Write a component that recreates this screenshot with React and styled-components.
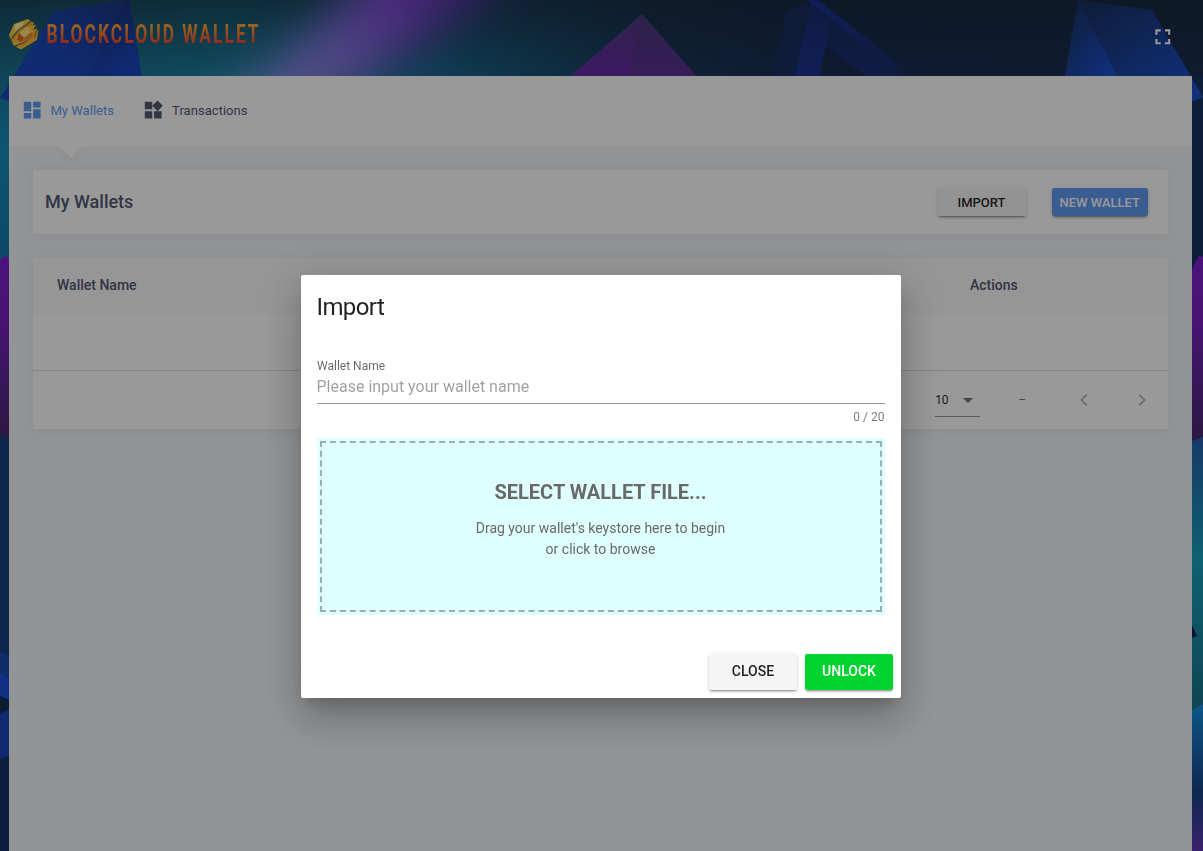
import React from "react";
import styled, { createGlobalStyle } from "styled-components";

const GlobalStyle = createGlobalStyle`
  * { box-sizing: border-box; }
  html, body { margin: 0; padding: 0; }
  body {
    font-family: Roboto, "Liberation Sans", sans-serif;
    background: #173567;
    overflow: hidden;
  }
  button, input { font-family: inherit; }
`;

const Backdrop = styled.svg`
  position: fixed;
  inset: 0;
  width: 1203px;
  height: 851px;
`;

const Page = styled.div`
  position: relative;
  display: flex;
  flex-direction: column;
  height: 851px;
  padding: 0 11px 0 9px;
`;

const TopBar = styled.header`
  display: flex;
  align-items: flex-start;
  justify-content: space-between;
  height: 76px;
  flex: none;
  padding: 15px 16px 0 0;
`;

const Logo = styled.svg`
  display: block;
  width: 260px;
  height: 38px;
`;

const WordMark = styled.text`
  font-family: Roboto, "Liberation Sans", sans-serif;
  font-weight: 700;
  font-size: 25.6px;
`;

const Icon = styled.svg`
  display: block;
  flex: none;
  width: ${(p) => p.$size}px;
  height: ${(p) => p.$size}px;
  fill: currentColor;
  color: ${(p) => p.$color || "inherit"};
`;

const FullscreenButton = styled.div`
  margin-top: 9px;
`;

const Main = styled.main`
  flex: 1;
  display: flex;
  flex-direction: column;
  background: #f4f7fa;
`;

const Nav = styled.nav`
  display: flex;
  align-items: center;
  gap: 27.8px;
  height: 70px;
  flex: none;
  padding-left: 12px;
  background: #fff;
`;

const Tab = styled.div`
  position: relative;
  display: flex;
  align-items: center;
  gap: ${(p) => (p.$active ? 7 : 7.8)}px;
  height: 70px;
  padding-bottom: 1px;
  font-size: 13px;
  color: ${(p) => (p.$active ? "#629cf2" : "#535973")};
`;

const TabLabel = styled.span`
  letter-spacing: 0.04px;
`;

const Pointer = styled.i`
  position: absolute;
  left: 41px;
  bottom: -8px;
  width: 18px;
  height: 18px;
  background: #fff;
  transform: rotate(45deg);
  box-shadow: 4px 4px 8px -2px rgba(69, 65, 78, 0.08);
  clip-path: polygon(100% 0, 200% 0, 200% 200%, 0 200%, 0 100%);
`;

const Content = styled.div`
  display: flex;
  flex-direction: column;
  gap: 24px;
  padding: 24px;
`;

const Panel = styled.section`
  background: #fff;
  box-shadow: 0 1px 15px 1px rgba(69, 65, 78, 0.08);
`;

const TitleRow = styled.div`
  display: flex;
  align-items: center;
  height: 64px;
  padding: 0 20px 0 12px;
  gap: 26px;
`;

const PanelTitle = styled.h2`
  flex: 1;
  margin: 0;
  padding-bottom: 2px;
  font-size: 18px;
  font-weight: 500;
  color: #535973;
`;

const tones = {
  plain: ["#f5f5f5", "rgba(0,0,0,.87)"],
  primary: ["#629cf2", "#fff"],
  success: ["#00d32f", "#fff"],
};

const Button = styled.button`
  min-width: 88px;
  height: ${(p) => (p.$small ? 28 : 36)}px;
  padding: ${(p) => (p.$small ? "0 8px" : "0 16px 2px 17px")};
  border: 0;
  border-radius: 2px;
  font-size: ${(p) => (p.$small ? 13 : 14)}px;
  font-weight: 500;
  white-space: nowrap;
  background: ${(p) => tones[p.$tone][0]};
  color: ${(p) => tones[p.$tone][1]};
  box-shadow: 0 3px 1px -2px rgba(0, 0, 0, 0.2), 0 2px 2px 0 rgba(0, 0, 0, 0.14),
    0 1px 5px 0 rgba(0, 0, 0, 0.12);
`;

const TableHead = styled.div`
  display: grid;
  grid-template-columns: 913px 1fr;
  align-items: center;
  height: 56px;
  padding: 0 0 2px 24px;
  background: #fafafa;
  color: #535973;
  font-size: 14px;
  font-weight: 500;
`;

const EmptyRow = styled.div`
  height: 56px;
`;

const TableFooter = styled.div`
  display: flex;
  align-items: center;
  justify-content: flex-end;
  height: 59px;
  padding-right: 14px;
  border-top: 1px solid #dfdfdf;
  font-size: 12px;
  color: rgba(0, 0, 0, 0.54);
`;

const PageSize = styled.div`
  display: flex;
  align-items: center;
  justify-content: space-between;
  width: 45px;
  height: 33px;
  border-bottom: 1px solid rgba(0, 0, 0, 0.42);
  color: rgba(0, 0, 0, 0.87);
`;

const Range = styled.span`
  margin: 0 46px 0 38px;
`;

const Pager = styled.div`
  display: flex;
  gap: 34px;
  color: rgba(0, 0, 0, 0.26);
`;

const Overlay = styled.div`
  position: fixed;
  inset: 0;
  display: flex;
  justify-content: center;
  align-items: flex-start;
  padding: 275px 2px 0 0;
  background: rgba(0, 0, 0, 0.4);
`;

const Dialog = styled.div`
  display: flex;
  flex-direction: column;
  width: 600px;
  height: 423px;
  border-radius: 2px;
  background: #fff;
  box-shadow: 0 11px 15px -7px rgba(0, 0, 0, 0.2), 0 24px 38px 3px rgba(0, 0, 0, 0.14),
    0 9px 46px 8px rgba(0, 0, 0, 0.12);
`;

const DialogTitle = styled.h1`
  margin: 0;
  padding: 16px;
  font-size: 24px;
  line-height: 32px;
  font-weight: 400;
  letter-spacing: -0.6px;
  color: rgba(0, 0, 0, 0.87);
`;

const DialogBody = styled.div`
  display: flex;
  flex-direction: column;
  flex: 1;
  padding: 18px 16px 0;
`;

const FieldLabel = styled.label`
  padding-left: 0.5px;
  font-size: 12px;
  line-height: 18px;
  color: rgba(0, 0, 0, 0.6);
`;

const Field = styled.input`
  height: 29px;
  padding: 0 0 5px;
  border: 0;
  border-bottom: 1px solid rgba(0, 0, 0, 0.42);
  outline: 0;
  font-size: 16px;
  &::placeholder { color: rgba(0, 0, 0, 0.38); }
`;

const Counter = styled.div`
  align-self: flex-end;
  margin: 4px 0 12px;
  font-size: 12px;
  line-height: 18px;
  color: rgba(0, 0, 0, 0.54);
`;

const DropZone = styled.div`
  height: 177px;
  padding-top: 39px;
  background: #dfffff;
  outline: 2px dashed #94b0b3;
  outline-offset: -5px;
  text-align: center;
  color: #696969;
`;

const DropTitle = styled.h3`
  margin: 0 0 11px;
  font-size: 20px;
  line-height: 30px;
  font-weight: 700;
`;

const DropHint = styled.p`
  margin: 0;
  font-size: 14px;
  line-height: 21px;
`;

const DialogActions = styled.div`
  display: flex;
  justify-content: flex-end;
  gap: 8px;
  padding: 8px;
`;

const Art = () => (
  <Backdrop viewBox="0 0 1203 851">
    <defs>
      <linearGradient id="sky" x1="0" x2="1" y1="0" y2="0">
        <stop offset="0" stopColor="#1b7492" />
        <stop offset=".2" stopColor="#1b7f9c" />
        <stop offset=".36" stopColor="#19688c" />
        <stop offset=".55" stopColor="#19375a" />
        <stop offset=".7" stopColor="#182c52" />
        <stop offset="1" stopColor="#192e50" />
      </linearGradient>
      <linearGradient id="shade" x1="0" x2="0" y1="0" y2="1">
        <stop offset="0" stopColor="#172638" stopOpacity=".6" />
        <stop offset="1" stopColor="#172638" stopOpacity="0" />
      </linearGradient>
      <linearGradient id="beam" gradientUnits="userSpaceOnUse" x1="265" y1="120" x2="460" y2="-20">
        <stop offset="0" stopColor="#9590f0" />
        <stop offset=".35" stopColor="#8f7be6" />
        <stop offset=".7" stopColor="#8049d4" />
        <stop offset="1" stopColor="#5d32a4" />
      </linearGradient>
      <linearGradient id="gemA" x1="1" x2="0" y1="0" y2="1">
        <stop offset="0" stopColor="#1b357c" />
        <stop offset=".6" stopColor="#1b48bc" />
      </linearGradient>
      <linearGradient id="gemB" x1="0" x2=".4" y1="0" y2="1">
        <stop offset="0" stopColor="#1b2a62" />
        <stop offset="1" stopColor="#1b46bd" />
      </linearGradient>
      <linearGradient id="peak" x1="0" x2="0" y1="0" y2="1">
        <stop offset="0" stopColor="#4b3d7d" />
        <stop offset="1" stopColor="#6a29a8" />
      </linearGradient>
      <linearGradient id="peakSide" x1="0" x2="0" y1="0" y2="1">
        <stop offset="0" stopColor="#493a76" />
        <stop offset="1" stopColor="#5d3097" />
      </linearGradient>
      <linearGradient id="rib" x1="0" x2="0" y1="0" y2="1">
        <stop offset="0" stopColor="#1b2e70" />
        <stop offset="1" stopColor="#1c359c" />
      </linearGradient>
      <linearGradient id="ray" x1="0" x2="1" y1="0" y2="1">
        <stop offset="0" stopColor="#1e37c0" />
        <stop offset="1" stopColor="#192e60" />
      </linearGradient>
      <linearGradient id="crystal" x1="0" x2=".8" y1="0" y2="1">
        <stop offset="0" stopColor="#1a2e55" />
        <stop offset="1" stopColor="#1b50cc" />
      </linearGradient>
      <linearGradient id="violet" x1="0" x2="0" y1="0" y2="1">
        <stop offset="0" stopColor="#7d21cf" />
        <stop offset=".35" stopColor="#7821c0" />
        <stop offset="1" stopColor="#472a6d" />
      </linearGradient>
      <linearGradient id="leftEdge" x1="0" x2="0" y1="0" y2="1">
        <stop offset="0" stopColor="#1b7492" />
        <stop offset=".4" stopColor="#178fc0" />
        <stop offset="1" stopColor="#1776ac" />
      </linearGradient>
      <linearGradient id="rightEdge" x1="0" x2="0" y1="0" y2="1">
        <stop offset="0" stopColor="#265eae" />
        <stop offset=".45" stopColor="#17a2bd" />
        <stop offset="1" stopColor="#1b728a" />
      </linearGradient>
      <linearGradient id="rightFoot" x1="0" x2="0" y1="0" y2="1">
        <stop offset="0" stopColor="#178fe0" />
        <stop offset=".6" stopColor="#174385" />
        <stop offset="1" stopColor="#6037b5" />
      </linearGradient>
      <filter id="soft" x="-50%" y="-100%" width="200%" height="300%">
        <feGaussianBlur stdDeviation="24" />
      </filter>
    </defs>
    <rect width="1203" height="76" fill="url(#sky)" />
    <rect width="1203" height="76" fill="url(#shade)" />
    <path d="M180 150 350 0 385 -60H540L470 5 330 100 270 160z" fill="url(#beam)" filter="url(#soft)" />
    <path d="M54 11 129 0 142 78H9V101L0 98z" fill="url(#gemA)" />
    <rect y="76" width="9" height="184" fill="url(#leftEdge)" />
    <path d="M9 84V101L0 98z" fill="#1b48bc" />
    <path d="M127 0H129L142 78H87z" fill="url(#gemB)" />
    <path d="M642 14 696 76H571z" fill="url(#peak)" />
    <path d="M642 14 696 76H629L638 28z" fill="url(#peakSide)" />
    <path d="M786 12 772 76H795L811 0z" fill="#1b3080" opacity=".35" />
    <path d="M811 2 795 76H819L826 47 867 76H900z" fill="url(#rib)" opacity=".45" />
    <path d="M811 2 795 76H819L830 22z" fill="url(#rib)" opacity=".8" />
    <path d="M808 0H818L914 76H900z" fill="url(#ray)" opacity=".7" />
    <rect x="1192" y="76" width="11" height="200" fill="#173262" />
    <path d="M1078 0 1152 10 1203 97 1192 102V76H1065z" fill="url(#crystal)" />
    <path d="M1078 0 1117 76H1065z" fill="url(#crystal)" />
    <path d="M0 260 6 255 9 260V439L0 434z" fill="url(#violet)" />
    <path d="M0 434 9 439V851H0z" fill="#17407a" />
    <path d="M0 651 9 656V678L0 673z" fill="#1b4bac" />
    <path d="M0 673 9 678V700L0 696z" fill="#1b4fd5" />
    <path d="M0 696 9 700V709L0 714z" fill="#153153" />
    <path d="M0 714 9 709V756L0 759z" fill="#1b45bd" />
    <path d="M0 759 9 756V851H0z" fill="#173567" />
    <path d="M1192 270 1199 255 1203 257V437L1192 441z" fill="url(#violet)" />
    <path d="M1192 441 1203 437V704L1192 710z" fill="url(#rightEdge)" />
    <path d="M1192 625 1197 636 1192 638z" fill="#142250" />
    <path d="M1192 710 1203 704V851H1192z" fill="url(#rightFoot)" />
  </Backdrop>
);

const Brand = () => (
  <Logo viewBox="0 0 260 38">
    <defs>
      <linearGradient id="brand" x1="0" x2="0" y1="0" y2="1">
        <stop offset=".2" stopColor="#fca338" />
        <stop offset=".8" stopColor="#ec4a30" />
      </linearGradient>
      <linearGradient id="gold" x1="0" x2="1" y1="0" y2="1">
        <stop offset="0" stopColor="#ffe04c" />
        <stop offset="1" stopColor="#f2a828" />
      </linearGradient>
    </defs>
    <path d="M5 9 19 4 21.5 6 8 16 3 22 2 25 0 20z" fill="url(#gold)" />
    <path d="M6 9.5 15 6.5 13 11 6 16z" fill="#fff0a8" />
    <path d="M22.5 6.5 25.5 8 22 12 8 21 3.5 28 2 25 9 16z" fill="#f0a52f" />
    <path d="M21 11 27 9.5 24 15 28 13 25 22 14 27.5 5 31 3.5 28 8 20z" fill="url(#gold)" />
    <path d="M10 17.5 18 12 22 17 15 23z" fill="#ffe27c" />
    <path d="M10 17.5 15 23 12 27 8 25z" fill="#e0642b" />
    <path d="M22 17 24.5 19 22 23 12 27 15 23z" fill="#ee8a2c" />
    <path d="M29.5 14 28 25 12 34.5 7 32 10 29.5 20 26z" fill="url(#gold)" />
    <path d="M28 15 25.5 22 14 28.5 9 30" fill="none" stroke="#c9542a" strokeWidth="1.1" />
    <path d="M25.5 20.5 23.5 26 13 32 15 28.5z" fill="#f6b83a" />
    <g transform="translate(37.5 28) scale(.68 1.01)">
      <WordMark textLength="312" lengthAdjust="spacing" fill="url(#brand)">
        BLOCKCLOUD WALLET
      </WordMark>
    </g>
  </Logo>
);

const paths = {
  dashboard: "M3 13h8V3H3v10zm0 8h8v-6H3v6zm10 0h8V11h-8v10zm0-18v6h8V3h-8z",
  widgets:
    "M13 13v8h8v-8h-8zM3 21h8v-8H3v8zM3 3v8h8V3H3zm13.66-1.31L11 7.34 16.66 13l5.66-5.66-5.66-5.65z",
  fullscreen:
    "M7 14H5v5h5v-2H7v-3zm-2-4h2V7h3V5H5v5zm12 7h-3v2h5v-5h-2v3zM14 5v2h3v3h2V5h-5z",
  left: "M15.41 7.41L14 6l-6 6 6 6 1.41-1.41L10.83 12z",
  right: "M10 6L8.59 7.41 13.17 12l-4.58 4.59L10 18l6-6z",
  dropdown: "M7 10l5 5 5-5z",
};

const Glyph = ({ name, size = 24, color }) => (
  <Icon viewBox="0 0 24 24" $size={size} $color={color}>
    <path d={paths[name]} />
  </Icon>
);

export default function App() {
  return (
    <>
      <GlobalStyle />
      <Art />
      <Page>
        <TopBar>
          <Brand />
          <FullscreenButton>
            <Glyph name="fullscreen" size={25.6} color="#fff" />
          </FullscreenButton>
        </TopBar>
        <Main>
          <Nav>
            <Tab $active>
              <Glyph name="dashboard" size={22.4} />
              <TabLabel>My Wallets</TabLabel>
              <Pointer />
            </Tab>
            <Tab>
              <Glyph name="widgets" size={22.4} />
              <TabLabel>Transactions</TabLabel>
            </Tab>
          </Nav>
          <Content>
            <Panel>
              <TitleRow>
                <PanelTitle>My Wallets</PanelTitle>
                <Button $small $tone="plain">IMPORT</Button>
                <Button $small $tone="primary">NEW WALLET</Button>
              </TitleRow>
            </Panel>
            <Panel>
              <TableHead>
                <span>Wallet Name</span>
                <span>Actions</span>
              </TableHead>
              <EmptyRow />
              <TableFooter>
                <PageSize>
                  10
                  <Glyph name="dropdown" color="rgba(0,0,0,.54)" />
                </PageSize>
                <Range>–</Range>
                <Pager>
                  <Glyph name="left" />
                  <Glyph name="right" />
                </Pager>
              </TableFooter>
            </Panel>
          </Content>
        </Main>
      </Page>
      <Overlay>
        <Dialog>
          <DialogTitle>Import</DialogTitle>
          <DialogBody>
            <FieldLabel htmlFor="wallet-name">Wallet Name</FieldLabel>
            <Field id="wallet-name" placeholder="Please input your wallet name" />
            <Counter>0 / 20</Counter>
            <DropZone>
              <DropTitle>SELECT WALLET FILE...</DropTitle>
              <DropHint>
                Drag your wallet's keystore here to begin
                <br />
                or click to browse
              </DropHint>
            </DropZone>
          </DialogBody>
          <DialogActions>
            <Button $tone="plain">CLOSE</Button>
            <Button $tone="success">UNLOCK</Button>
          </DialogActions>
        </Dialog>
      </Overlay>
    </>
  );
}
